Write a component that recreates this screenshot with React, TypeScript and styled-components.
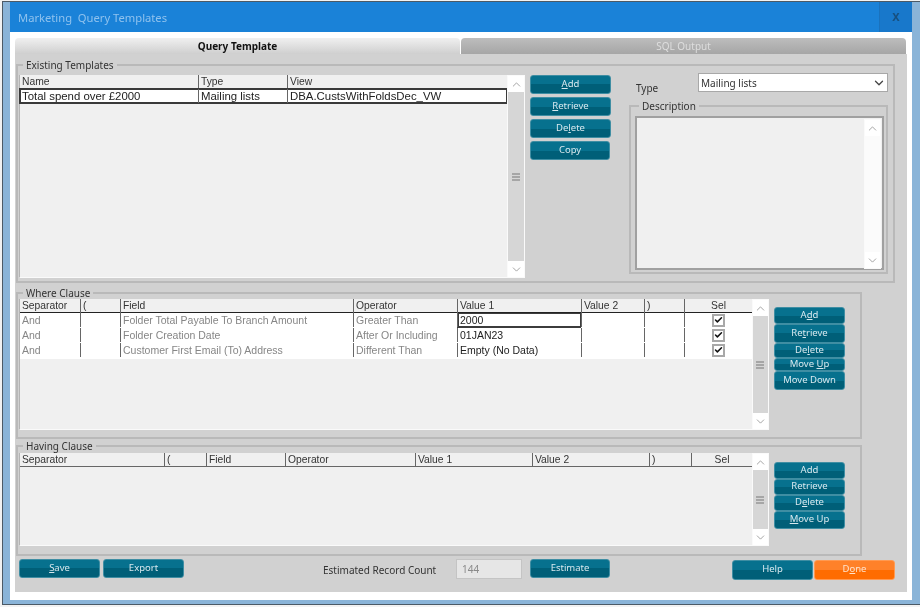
import React from "react";
import styled, { createGlobalStyle } from "styled-components";
import { ChevronUp, ChevronDown, Check } from "lucide-react";

const Global = createGlobalStyle`
  html, body { margin: 0; padding: 0; width: 920px; height: 607px; overflow: hidden; background: #f2f2f2; }
  * { box-sizing: border-box; }
`;
const uiFont = `"Noto Sans", "Open Sans", sans-serif`;
const gridFont = `"Liberation Sans", Arial, sans-serif`;

const Page = styled.div`
  width: 920px; height: 607px; padding: 1px 0 0 2px; font-family: ${uiFont}; color: #333;
  filter: blur(0.3px);
`;
const Win = styled.div`
  height: 604px; display: flex; flex-direction: column; background: #8ab4d8;
  border: 1px solid #4c5a66; border-right: none; padding: 0 8px 4px 7px;
`;
const TitleBar = styled.div`
  height: 30px; flex: none; display: flex; align-items: center; justify-content: space-between;
  background: #1a82d8; padding-left: 8px;
`;
const Title = styled.div`
  font-size: 11.2px; color: #8fc2ee; white-space: pre;
`;
const Close = styled.div`
  width: 33px; height: 30px; padding-bottom: 2px; display: flex; align-items: center; justify-content: center;
  background: #1878cb; border-left: 1px solid #1a72bd; color: #17507f; font-size: 11px; font-weight: 700;
`;
const Body = styled.div`
  flex: 1; background: #fff; padding: 6px 5px 8px 5px; display: flex; flex-direction: column;
`;
const Tabs = styled.div`
  height: 16px; flex: none; display: flex; gap: 1px;
`;
const Tab = styled.div<{ $active?: boolean }>`
  width: 445px; display: flex; align-items: center; justify-content: center; font-size: 10px;
  border-radius: 4px 4px 0 0;
  font-weight: ${(p) => (p.$active ? 700 : 400)};
  color: ${(p) => (p.$active ? "#111" : "#dedede")};
  background: ${(p) => (p.$active ? "linear-gradient(#f0f0f0, #cfcfcf)" : "linear-gradient(#bdbdbd, #a6a6a6)")};
`;
const Panel = styled.div`
  flex: 1; background: #d1d1d1; padding: 6px 0 0 1px; display: flex; flex-direction: column;
`;
const Group = styled.fieldset<{ $w: number; $pt: number; $pb: number; $pl?: number; $pr?: number; $mt?: number }>`
  margin: ${(p) => p.$mt ?? 0}px 0 0; min-width: 0; flex: none;
  width: ${(p) => p.$w}px; border: 2px solid #b9b9b9;
  padding: ${(p) => p.$pt}px ${(p) => p.$pr ?? 0}px ${(p) => p.$pb}px ${(p) => p.$pl ?? 1}px;
`;
const Legend = styled.legend`
  margin-left: 4px; padding: 0 3px; font-size: 10px; line-height: 10px; height: 10px; color: #333;
`;
const Row = styled.div`
  display: flex; align-items: flex-start;
`;
const Sheet = styled.div<{ $w: number; $h: number }>`
  width: ${(p) => p.$w + 1}px; height: ${(p) => p.$h}px; flex: none; background: #f0f0f0;
  font-family: ${gridFont}; display: flex; flex-direction: column;
  border-left: 1px solid #b4b4b4; border-bottom: 1px solid #fafafa;
`;
const GridRow = styled.div<{ $cols: string; $h: number; $head?: boolean; $line?: string; $sel?: boolean }>`
  display: grid; grid-template-columns: ${(p) => p.$cols}; height: ${(p) => p.$h}px; flex: none;
  background: ${(p) => (p.$head ? "#f0f0f0" : "#fff")};
  border-bottom: ${(p) => (p.$line ? `1px solid ${p.$line}` : "none")};
  box-shadow: ${(p) => (p.$sel ? "0 0 0 1px #3a3a3a, inset 0 0 0 1px #3a3a3a" : "none")};
  font-size: ${(p) => (p.$head ? "10.3px" : "10.5px")};
  padding-bottom: ${(p) => (p.$head ? "0" : "2px")};
`;
const Cell = styled.div<{ $tone?: "dim" | "dark"; $center?: boolean; $boxed?: boolean; $big?: boolean }>`
  border-left: 1px solid #666; padding: 0 2px; display: flex; align-items: center; white-space: nowrap;
  line-height: 14px; margin-bottom: ${(p) => (p.$center ? "0" : "0")};
  font-size: ${(p) => (p.$big ? "11.4px" : "inherit")};
  justify-content: ${(p) => (p.$center ? "center" : "flex-start")};
  color: ${(p) => (p.$tone === "dim" ? "#868686" : p.$tone === "dark" ? "#222" : "#333")};
  ${(p) => (p.$boxed ? "box-shadow: 0 2px 0 0 #3c3c3c, inset 0 0 0 1px #3c3c3c;" : "")}
  &:first-child { border-left: none; }
`;
const Scroll = styled.div<{ $w?: number; $h: number; $white?: boolean }>`
  width: ${(p) => p.$w ?? 18}px; height: ${(p) => p.$h}px; flex: none; display: flex; flex-direction: column;
  background: ${(p) => (p.$white ? "#fbfbfb" : "#d6d6d6")}; border: 1px solid #fafafa; color: #777;
`;
const ScrollBtn = styled.div`
  height: 16px; flex: none; background: #fff; display: flex; align-items: center; justify-content: center; color: #8a8a8a;
`;
const ScrollMid = styled.div`
  flex: 1; display: flex; align-items: center; justify-content: center;
`;
const Buttons = styled.div<{ $gap?: number; $mt?: number; $ml: number }>`
  display: flex; flex-direction: column; gap: ${(p) => p.$gap ?? 0}px; flex: none;
  margin: ${(p) => p.$mt ?? 0}px 0 0 ${(p) => p.$ml}px;
`;
const Btn = styled.button<{ $w?: number; $h?: number; $orange?: boolean; $ml?: number }>`
  width: ${(p) => p.$w ?? 81}px; height: ${(p) => p.$h ?? 19}px; padding: 0 0 2px; margin: 0 0 0 ${(p) => p.$ml ?? 0}px; flex: none;
  font-family: ${uiFont}; font-size: 9.5px; line-height: 10px;
  color: ${(p) => (p.$orange ? "#ffe3cc" : "#d7e8ee")};
  border-radius: 3px; overflow: hidden;
  border: 1px solid ${(p) => (p.$orange ? "#ff9a52" : "#3f8ea3")};
  background: ${(p) =>
    p.$orange
      ? "linear-gradient(#ff8129 0 50%, #ff6c00 50% 100%)"
      : "linear-gradient(#07718e 0 50%, #005f78 50% 100%)"};
`;
const RightCol = styled.div`
  width: 259px; margin: -2px 0 0 18px; flex: none; display: flex; flex-direction: column;
`;
const TypeRow = styled.div`
  display: flex; align-items: flex-end; height: 19px;
`;
const TypeLabel = styled.div`
  width: 69px; padding-left: 7px; font-size: 10px; line-height: 14px; margin-bottom: -3px;
`;
const SelectBox = styled.div`
  width: 190px; height: 19px; background: #fff; border: 1px solid #a8a8a8; display: flex; align-items: center;
  justify-content: space-between; padding: 0 1px 0 2px; font-size: 10px; color: #333;
`;
const Memo = styled.div`
  width: 249px; height: 154px; background: #f0f0f0; border: 2px solid #a0a0a0; display: flex; justify-content: flex-end;
  padding: 1px 1px 1px 0;
`;
const Footer = styled.div`
  display: flex; align-items: flex-start; margin-top: 3px; padding-left: 3px;
`;
const CountLabel = styled.div`
  margin: 4px 20px 0 139px; width: 113px; font-size: 10px; line-height: 14px; white-space: nowrap;
`;
const CountInput = styled.div`
  width: 66px; height: 20px; background: #e6e6e6; border: 1px solid #f2f2f2; outline: 1px solid #c4c4c4; outline-offset: -1px;
  display: flex; align-items: center; padding-left: 5px; font-size: 10px; color: #8a8a8a; margin-right: 8px;
`;
const EndButtons = styled.div`
  display: flex; gap: 1px; margin: 1px 0 0 122px;
`;
const Tick = styled.div`
  width: 13px; height: 13px; background: #fff; border: 2px solid #a8a8a8; display: flex; align-items: center; justify-content: center; color: #111;
`;

const Grip = () => (
  <svg width="9" height="8" viewBox="0 0 9 8">
    <path d="M0 1h8M0 4h8M0 7h8" stroke="#777" strokeWidth="1" />
  </svg>
);

const ScrollBar = ({ h, w, white, noGrip }: { h: number; w?: number; white?: boolean; noGrip?: boolean }) => (
  <Scroll $h={h} $w={w} $white={white}>
    <ScrollBtn><ChevronUp size={13} strokeWidth={1.4} /></ScrollBtn>
    <ScrollMid>{!noGrip && <Grip />}</ScrollMid>
    <ScrollBtn><ChevronDown size={13} strokeWidth={1.4} /></ScrollBtn>
  </Scroll>
);

const tplCols = "178px 89px 220px";
const whereCols = "60px 40px 233px 104px 124px 63px 40px 68px";
const havingCols = "144px 42px 79px 130px 117px 117px 42px 61px";

const whereRows = [
  { f: "Folder Total Payable To Branch Amount", o: "Greater Than", v: "2000", h: 15, boxed: true },
  { f: "Folder Creation Date", o: "After Or Including", v: "01JAN23", h: 15, boxed: false },
  { f: "Customer First Email (To) Address", o: "Different Than", v: "Empty (No Data)", h: 16, boxed: false },
];

export default function App() {
  return (
    <Page>
      <Global />
      <Win>
        <TitleBar>
          <Title>Marketing  Query Templates</Title>
          <Close>X</Close>
        </TitleBar>
        <Body>
          <Tabs>
            <Tab $active>Query Template</Tab>
            <Tab>SQL Output</Tab>
          </Tabs>
          <Panel>
            <Group $w={879} $pt={5} $pb={3}>
              <Legend>Existing Templates</Legend>
              <Row>
                <Sheet $w={487} $h={203}>
                  <GridRow $cols={tplCols} $h={14} $head>
                    <Cell>Name</Cell><Cell>Type</Cell><Cell>View</Cell>
                  </GridRow>
                  <GridRow $cols={tplCols} $h={14} $sel>
                    <Cell $big $tone="dark">Total spend over £2000</Cell>
                    <Cell $big $tone="dark">Mailing lists</Cell>
                    <Cell $big $tone="dark">DBA.CustsWithFoldsDec_VW</Cell>
                  </GridRow>
                </Sheet>
                <ScrollBar h={203} />
                <Buttons $ml={5} $gap={3}>
                  <Btn><u>A</u>dd</Btn>
                  <Btn><u>R</u>etrieve</Btn>
                  <Btn>De<u>l</u>ete</Btn>
                  <Btn $w={80}>Copy</Btn>
                </Buttons>
                <RightCol>
                  <TypeRow>
                    <TypeLabel>Type</TypeLabel>
                    <SelectBox>Mailing lists<ChevronDown size={14} strokeWidth={2.2} color="#444" /></SelectBox>
                  </TypeRow>
                  <Group $w={259} $mt={9} $pt={5} $pb={2} $pl={4} $pr={2}>
                    <Legend>Description</Legend>
                    <Memo><ScrollBar h={150} w={17} white noGrip /></Memo>
                  </Group>
                </RightCol>
              </Row>
            </Group>
            <Group $w={846} $mt={5} $pt={1} $pb={7}>
              <Legend>Where Clause</Legend>
              <Row>
                <Sheet $w={732} $h={131}>
                  <GridRow $cols={whereCols} $h={14} $head $line="#222">
                    <Cell>Separator</Cell><Cell>(</Cell><Cell>Field</Cell><Cell>Operator</Cell>
                    <Cell>Value 1</Cell><Cell>Value 2</Cell><Cell>)</Cell><Cell $center>Sel</Cell>
                  </GridRow>
                  {whereRows.map((r) => (
                    <GridRow key={r.f} $cols={whereCols} $h={r.h}>
                      <Cell $tone="dim">And</Cell>
                      <Cell />
                      <Cell $tone="dim">{r.f}</Cell>
                      <Cell $tone="dim">{r.o}</Cell>
                      <Cell $tone="dark" $boxed={r.boxed}>{r.v}</Cell>
                      <Cell />
                      <Cell />
                      <Cell $center><Tick><Check size={10} strokeWidth={4} /></Tick></Cell>
                    </GridRow>
                  ))}
                </Sheet>
                <ScrollBar h={131} w={17} />
                <Buttons $ml={5} $mt={8}>
                  <Btn $w={71} $h={17}>A<u>d</u>d</Btn>
                  <Btn $w={71} $h={19}>Re<u>t</u>rieve</Btn>
                  <Btn $w={71} $h={15}>De<u>l</u>ete</Btn>
                  <Btn $w={71} $h={13}>Move <u>U</u>p</Btn>
                  <Btn $w={71} $h={19}>Move Down</Btn>
                </Buttons>
              </Row>
            </Group>
            <Group $w={846} $mt={2} $pt={2} $pb={8}>
              <Legend>Having Clause</Legend>
              <Row>
                <Sheet $w={732} $h={93}>
                  <GridRow $cols={havingCols} $h={14} $head $line="#666">
                    <Cell>Separator</Cell><Cell>(</Cell><Cell>Field</Cell><Cell>Operator</Cell>
                    <Cell>Value 1</Cell><Cell>Value 2</Cell><Cell>)</Cell><Cell $center>Sel</Cell>
                  </GridRow>
                </Sheet>
                <ScrollBar h={93} w={17} />
                <Buttons $ml={5} $mt={9}>
                  <Btn $w={71} $h={17}>Add</Btn>
                  <Btn $w={71} $h={16}>Retrieve</Btn>
                  <Btn $w={71} $h={16}>D<u>e</u>lete</Btn>
                  <Btn $w={71} $h={18}><u>M</u>ove Up</Btn>
                </Buttons>
              </Row>
            </Group>
            <Footer>
              <Btn><u>S</u>ave</Btn>
              <Btn $ml={3}>Export</Btn>
              <CountLabel>Estimated Record Count</CountLabel>
              <CountInput>144</CountInput>
              <Btn $w={80}>Estimate</Btn>
              <EndButtons>
                <Btn $h={20}>Help</Btn>
                <Btn $h={20} $orange>D<u>o</u>ne</Btn>
              </EndButtons>
            </Footer>
          </Panel>
        </Body>
      </Win>
    </Page>
  );
}
